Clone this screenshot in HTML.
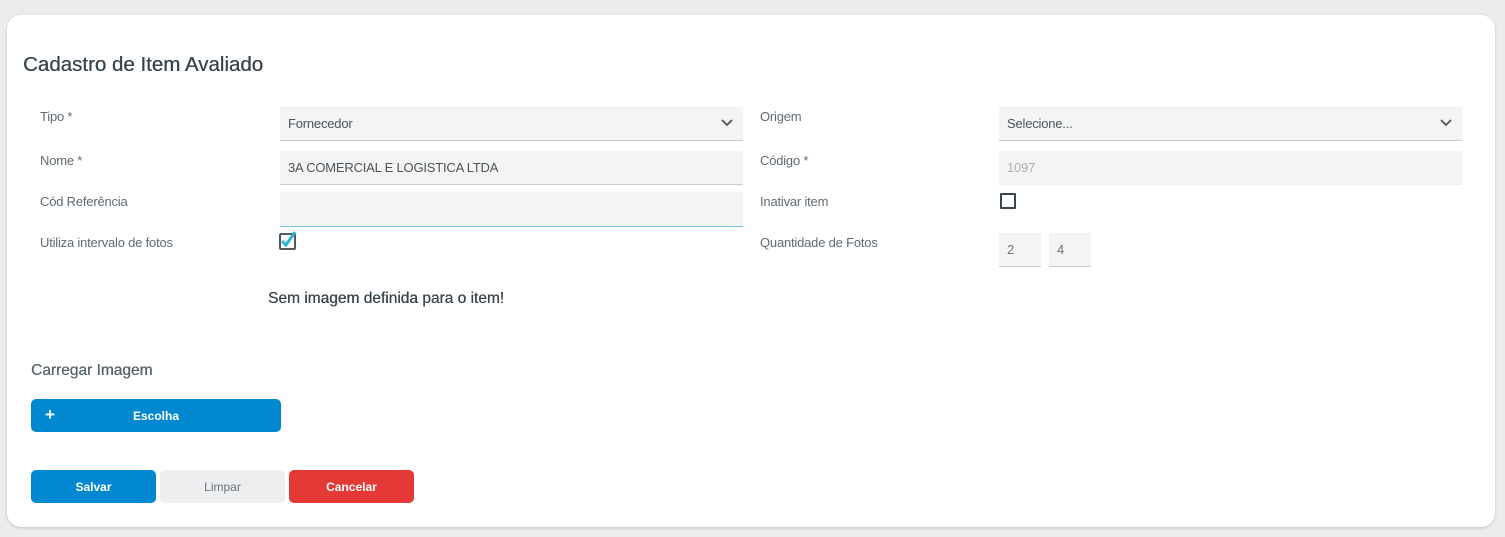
<!DOCTYPE html>
<html><head><meta charset="utf-8"><style>
*{box-sizing:border-box;margin:0;padding:0}
body{width:1505px;height:537px;background:#ececec;font-family:"Liberation Sans",sans-serif;position:relative;overflow:hidden}
.card{position:absolute;left:7px;top:15px;width:1488px;height:512px;background:#fff;border-radius:14px;box-shadow:0 1px 3px rgba(0,0,0,.18)}
.a{position:absolute;white-space:nowrap}
.lbl{font-size:13px;color:#5f6b72;letter-spacing:-0.2px}
.inp{position:absolute;background:#f4f4f4;border-bottom:1px solid #c9ced3;font-size:13px;color:#4a555c;padding-left:8px;display:flex;align-items:center;letter-spacing:-0.2px}
.btn{position:absolute;border-radius:5px;font-size:12px;display:flex;align-items:center;justify-content:center;color:#fff}
.chev{position:absolute;right:10px;top:12px}
</style></head><body>
<div class="card"></div>
<div class="a" style="left:23px;top:53px;font-size:20.5px;color:#37444c;text-shadow:0.3px 0 0 #37444c">Cadastro de Item Avaliado</div>

<div class="a lbl" style="left:40px;top:109px">Tipo *</div>
<div class="inp" style="left:280px;top:107px;width:463px;height:34px">Fornecedor<svg class="chev" width="12" height="8" viewBox="0 0 12 8"><path d="M1 1l5 5 5-5" fill="none" stroke="#4a555c" stroke-width="1.8"/></svg></div>
<div class="a lbl" style="left:40px;top:153px">Nome *</div>
<div class="inp" style="left:280px;top:151px;width:463px;height:34px">3A COMERCIAL E LOGISTICA LTDA</div>
<div class="a lbl" style="left:40px;top:194px">Cód Referência</div>
<div class="inp" style="left:280px;top:192px;width:463px;height:35px;border-bottom:1px solid #6ec3ea"></div>
<div class="a lbl" style="left:40px;top:235px">Utiliza intervalo de fotos</div>
<svg class="a" style="left:278px;top:230px" width="22" height="20" viewBox="0 0 22 20"><rect x="2" y="4" width="15" height="15" rx="1" fill="#fff" stroke="#37474f" stroke-width="1.8"/><path d="M4 11l4 4 9-13" fill="none" stroke="#27b6d6" stroke-width="3"/></svg>

<div class="a lbl" style="left:760px;top:109px">Origem</div>
<div class="inp" style="left:999px;top:107px;width:463px;height:34px">Selecione...<svg class="chev" width="12" height="8" viewBox="0 0 12 8"><path d="M1 1l5 5 5-5" fill="none" stroke="#4a555c" stroke-width="1.8"/></svg></div>
<div class="a lbl" style="left:760px;top:153px">Código *</div>
<div class="inp" style="left:999px;top:151px;width:463px;height:34px;color:#a9b0b4;border-bottom-color:#eceef0">1097</div>
<div class="a lbl" style="left:760px;top:194px">Inativar item</div>
<div class="a" style="left:1000px;top:193px;width:16px;height:16px;border:2px solid #37474f;border-radius:1px"></div>
<div class="a lbl" style="left:760px;top:235px">Quantidade de Fotos</div>
<div class="inp" style="left:999px;top:233px;width:42px;height:34px;color:#6b757b">2</div>
<div class="inp" style="left:1049px;top:233px;width:42px;height:34px;color:#6b757b">4</div>

<div class="a" style="left:268px;top:290px;font-size:15.5px;color:#37444c;text-shadow:0.3px 0 0 #37444c">Sem imagem definida para o item!</div>
<div class="a" style="left:31px;top:362px;font-size:15.5px;color:#56636b;text-shadow:0.3px 0 0 #56636b">Carregar Imagem</div>
<div class="btn" style="left:31px;top:399px;width:250px;height:33px;background:#0288d1;font-weight:bold">Escolha<span style="position:absolute;left:14px;top:6px;font-size:17px;font-weight:bold">+</span></div>
<div class="btn" style="left:31px;top:470px;width:125px;height:33px;background:#0288d1;font-weight:bold">Salvar</div>
<div class="btn" style="left:160px;top:470px;width:125px;height:33px;background:#eceef0;color:#6b757b">Limpar</div>
<div class="btn" style="left:289px;top:470px;width:125px;height:33px;background:#e53935;font-weight:bold">Cancelar</div>
</body></html>
